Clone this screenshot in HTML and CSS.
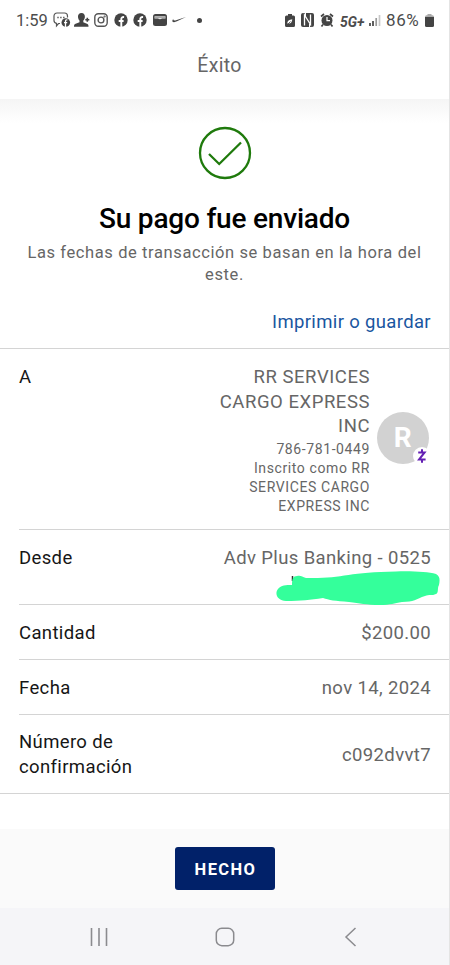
FILE: index.html
```html
<!DOCTYPE html>
<html lang="es">
<head>
  <meta charset="UTF-8">
  <meta name="viewport" content="width=device-width, initial-scale=1.0">
  <title>Éxito</title>
  <link rel="stylesheet" href="styles.css">
</head>
<body>
  <div class="phone">
    <div class="status-bar">
      <div class="status-left">
        <span class="time">1:59</span>
        <svg class="icon-chat" width="18" height="16" viewBox="0 0 18 16">
          <path d="M7 11.5H5.5L3.5 13.8V11.4C1.8 11 1 10 1 8.500V4C1 2.200 2.200 1 4 1h7.500c1.800 0 3 1.200 3 3v1.500" fill="none" stroke="#555" stroke-width="1.200"/>
          <path d="M4.300 5.500h1.400M7.200 5.500h1.400M10.100 5.500h1.400" stroke="#555" stroke-width="1.500"/>
          <circle cx="12.800" cy="10.500" r="4.300" fill="#444"/>
          <path d="M12.500 15v-6q0-1.400 1.900-1.200M11 10.700h3.200" fill="none" stroke="#fff" stroke-width="1.300"/>
        </svg>
        <svg class="icon-person" width="16" height="14" viewBox="0 0 16 14">
          <path d="M7.500 0C5 0 3.800 1.700 4 4c.1 1.600.7 2.800 1.500 3.500v1.700L1 11c-.8.500-1 1.200-1 2.700h14.500c0-1.500-.2-2.200-1-2.700L9.300 9.200V7.500c.8-.7 1.500-1.900 1.600-3.500C11 1.700 10 0 7.500 0z" fill="#444"/>
          <path d="M13.300 4.700v4M11.300 6.700h4" stroke="#444" stroke-width="1.600"/>
        </svg>
        <svg class="icon-insta" width="14" height="14" viewBox="0 0 14 14" fill="none" stroke="#555" stroke-width="1.400">
          <rect x=".8" y=".8" width="12.400" height="12.400" rx="3.500"/>
          <circle cx="7" cy="7" r="2.900"/>
          <circle cx="10.600" cy="3.500" r=".4"/>
        </svg>
        <svg class="icon-fb" width="14" height="14" viewBox="0 0 14 14">
          <circle cx="7" cy="7" r="6.700" fill="#444"/>
          <path d="M7.300 14V6q0-2.200 2.800-1.900M4.700 8h4.900" fill="none" stroke="#fff" stroke-width="1.900"/>
        </svg>
        <svg class="icon-fb" width="14" height="14" viewBox="0 0 14 14">
          <circle cx="7" cy="7" r="6.700" fill="#444"/>
          <path d="M7.300 14V6q0-2.200 2.800-1.900M4.700 8h4.900" fill="none" stroke="#fff" stroke-width="1.900"/>
        </svg>
        <svg class="icon-card" width="14" height="12" viewBox="0 0 14 12">
          <rect width="14" height="12" rx="2.500" fill="#444"/>
          <path d="M1.500 2.300h11v2.200H9q-2 1.600-4 0H1.500z" fill="#e4e4e4"/>
          <path d="M1.500 3.300h11" stroke="#777" stroke-width=".7"/>
        </svg>
        <svg class="icon-swoosh" width="14" height="6" viewBox="0 0 14 6">
          <path d="M1.300 1.800C0 3.500-.2 5.300 2 5.200c1 0 2-.5 3-.9L14 0 4 3.200C2.300 3.700 1 3.400 1.300 1.800z" fill="#444"/>
        </svg>
        <span class="dot"></span>
      </div>
      <div class="status-right">
        <svg width="10" height="13" viewBox="0 0 10 13">
          <path d="M3 0h4v1.500h1.500q1.500 0 1.500 1.500v8.500q0 1.500-1.500 1.500h-7Q0 13 0 11.500V3q0-1.500 1.500-1.500H3z" fill="#444"/>
          <path d="M2.300 9.500c0-3 2-3.800 5-4.300-.2 2.800-1.500 4.300-3.300 4.300z" fill="#fff"/>
          <path d="M2 11l3.500-3.500" stroke="#444" stroke-width=".8"/>
        </svg>
        <svg class="icon-nfc" width="13" height="14" viewBox="0 0 13 14">
          <rect width="13" height="14" rx="2" fill="#444"/>
          <path d="M3.500 12.500V2l6 9.500V1.500" fill="none" stroke="#fff" stroke-width="1.300"/>
          <path d="M4.500 0v3M8.500 14v-3" stroke="#fff"/>
        </svg>
        <svg class="icon-alarm" width="14" height="14" viewBox="0 0 14 14">
          <circle cx="7" cy="7.500" r="5.500" fill="#444"/>
          <path d="M1 3.500L4 1M13 3.500L10 1M3 11.500l-1.500 2M11 11.500l1.500 2" stroke="#444" stroke-width="1.700"/>
          <path d="M7 4v3.700h3" fill="none" stroke="#fff" stroke-width="1.200"/>
        </svg>
        <span class="network">5G+</span>
        <svg class="icon-signal" width="12" height="12" viewBox="0 0 12 12">
          <path d="M1 9v3M4 7v5" stroke="#444" stroke-width="1.700"/>
          <path d="M7.200 4v8" stroke="#999" stroke-width="1.700"/>
          <path d="M10.500 1v11" stroke="#c8c8c8" stroke-width="1.700"/>
        </svg>
        <span class="battery-text">86%</span>
        <svg class="icon-battery" width="9" height="13" viewBox="0 0 9 13">
          <path d="M2.500 0h4v1.300h1Q9 1.300 9 3H0q0-1.700 1.500-1.700h1z" fill="#aaa"/>
          <path d="M0 3h9v8.500q0 1.500-1.500 1.500h-6Q0 13 0 11.500z" fill="#444"/>
        </svg>
      </div>
    </div>

    <header class="title-bar">Éxito</header>

    <main>
      <section class="success">
        <svg class="check" width="54" height="54" viewBox="0 0 54 54" fill="none" stroke="#1f7a0c" stroke-width="2.300">
          <circle cx="27" cy="27" r="25"/>
          <path d="M11 28l10.200 10L43 16.500"/>
        </svg>
        <h1>Su pago fue enviado</h1>
        <p class="sub">Las fechas de transacción se basan en la hora del este.</p>
        <a class="print">Imprimir o guardar</a>
      </section>

      <section class="details">
        <div class="row recipient">
          <span class="label">A</span>
          <div class="payee">
            <div class="value">RR SERVICES<br>CARGO EXPRESS<br>INC</div>
            <div class="small">786-781-0449<br>Inscrito como RR<br>SERVICES CARGO<br>EXPRESS INC</div>
          </div>
          <div class="avatar">
            <span>R</span>
            <div class="zelle">
              <svg width="10" height="14" viewBox="0 0 10 14" fill="none" stroke="#6420b4" stroke-width="2">
                <path d="M1.200 3.400h6.400L2 10.600h6.600M5 .3v3M5 10.700v3"/>
              </svg>
            </div>
          </div>
        </div>
        <div class="row from">
          <span class="label">Desde</span>
          <span class="value">Adv Plus Banking - 0525</span>
          <svg class="scribble" width="166" height="36" viewBox="0 0 166 36">
            <path d="M16.500 5v5" stroke="#333" stroke-width="1.500"/>
            <path d="M16 14C16 8 17 5 21 5c4-1 5 1 9 2C65 8 72 1 120 .5c18-.5 32 .5 40 2.500 4 2 4 6 3 11-2 3 0 8-3 9-4 2-7 0-11 2-9 3-11 6-23 6-8 1-11 3-22 3-14 0-20-2-31-3-14-1-20-2-26-4-13 2-22 3-37 3C2 30-2 23 2 18c3-4 8-4 14-4z" fill="#34ff9b"/>
          </svg>
        </div>
        <div class="row">
          <span class="label">Cantidad</span>
          <span class="value">$200.00</span>
        </div>
        <div class="row">
          <span class="label">Fecha</span>
          <span class="value">nov 14, 2024</span>
        </div>
        <div class="row confirmation">
          <span class="label">Número de<br>confirmación</span>
          <span class="value">c092dvvt7</span>
        </div>
      </section>
    </main>

    <footer>
      <button class="done">HECHO</button>
    </footer>

    <nav class="nav-bar">
      <svg width="20" height="20" viewBox="0 0 20 20" stroke="#8b8b8f" stroke-width="1.600">
        <path d="M2.500 1v18M10 1v18M17.500 1v18"/>
      </svg>
      <svg width="20" height="20" viewBox="0 0 20 20" fill="none" stroke="#8b8b8f" stroke-width="1.500">
        <rect x="1.300" y="1.300" width="17.400" height="17.400" rx="5.500"/>
      </svg>
      <svg width="20" height="20" viewBox="0 0 20 20" fill="none" stroke="#8b8b8f" stroke-width="1.500">
        <path d="M15.500 1L6 10l9.500 9"/>
      </svg>
    </nav>
  </div>
</body>
</html>
```
FILE: styles.css
```css
* {
  box-sizing: border-box;
}

body {
  margin: 0;
  font-family: Roboto, sans-serif;
  background: #fff;
  color: #161616;
}

svg {
  display: block;
  flex-shrink: 0;
}

.phone {
  width: 450px;
  height: 965px;
  display: flex;
  flex-direction: column;
  border-right: 1px solid #e4e4e4;
  overflow: hidden;
}

/* status bar */
.status-bar {
  height: 40px;
  padding: 0 15px 0 16px;
  display: flex;
  justify-content: space-between;
  color: #4c4c4c;
}

.status-left,
.status-right {
  display: flex;
  align-items: center;
}

.time {
  width: 37px;
  font-size: 16.5px;
}

.icon-person {
  margin-left: 3px;
}

.icon-insta {
  margin-left: 4px;
}

.icon-fb {
  margin-left: 6px;
}

.icon-fb + .icon-fb {
  margin-left: 5px;
}

.icon-card {
  margin-left: 6px;
}

.icon-swoosh {
  margin-left: 5px;
}

.dot {
  width: 5px;
  height: 5px;
  margin-left: 11px;
  border-radius: 50%;
  background: #444;
}

.icon-nfc {
  margin-left: 6px;
}

.icon-alarm {
  margin-left: 6px;
}

.network {
  width: 30px;
  margin-left: 6px;
  padding-top: 3px;
  font-size: 14px;
  font-weight: 700;
  font-style: italic;
}

.icon-signal {
  margin-left: -1px;
}

.battery-text {
  width: 38px;
  margin-left: 5px;
  font-size: 17px;
  letter-spacing: 0.6px;
}

.icon-battery {
  margin-left: 1px;
}

.title-bar {
  height: 59px;
  line-height: 52px;
  text-align: center;
  font-size: 19.5px;
  letter-spacing: 0.3px;
  text-indent: -10px;
  color: #666;
}

/* success message */
.success {
  height: 249px;
  padding-top: 27px;
  display: flex;
  flex-direction: column;
  align-items: center;
  background: linear-gradient(#f5f5f5, #fff 24px);
}

h1 {
  margin: 21px 0 0;
  font-size: 28px;
  line-height: 36px;
  font-weight: 500;
  letter-spacing: -0.2px;
  color: #000;
}

.sub {
  margin: 5px 0 0;
  width: 410px;
  text-align: center;
  font-size: 16.5px;
  line-height: 22px;
  letter-spacing: 0.6px;
  color: #666;
}

.print {
  align-self: flex-end;
  margin: 24px 18px 0 0;
  font-size: 18.5px;
  line-height: 24px;
  letter-spacing: 0.35px;
  color: #1a56a0;
}

/* payment details */
.details {
  border-top: 1px solid #d4d4d4;
  border-bottom: 1px solid #d4d4d4;
}

.row {
  position: relative;
  height: 55px;
  margin-left: 19px;
  padding: 2px 18px 0 0;
  display: flex;
  justify-content: space-between;
  align-items: center;
  border-bottom: 1px solid #d4d4d4;
  font-size: 18.5px;
  line-height: 24.700px;
  letter-spacing: 0.37px;
}

.value {
  color: #666;
  text-align: right;
}

.recipient {
  height: 181px;
  align-items: flex-start;
  padding-top: 16px;
}

.recipient .value {
  letter-spacing: 0.55px;
}

.payee {
  margin-left: auto;
  text-align: right;
}

.small {
  margin-top: 1px;
  font-size: 14px;
  line-height: 18.800px;
  letter-spacing: 0.6px;
  color: #666;
}

.avatar {
  position: relative;
  width: 52px;
  height: 52px;
  margin: 47px 2px 0 7px;
  border-radius: 50%;
  background: #d2d2d2;
  color: #fff;
  font-size: 28px;
  font-weight: 700;
  line-height: 52px;
  text-align: center;
}

.zelle {
  position: absolute;
  right: -2px;
  bottom: -1px;
  width: 18px;
  height: 18px;
  display: flex;
  align-items: center;
  justify-content: center;
  border-radius: 50%;
  background: #fff;
}

.from {
  height: 75px;
  align-items: flex-start;
  padding-top: 16px;
}

/* marker stroke hiding the balance */
.scribble {
  position: absolute;
  right: 7px;
  top: 41px;
}

.confirmation {
  height: 78px;
  border-bottom: none;
}

footer {
  height: 79px;
  margin-top: auto;
  padding-top: 18px;
  text-align: center;
  background: #fafafa;
}

.done {
  width: 100px;
  height: 43px;
  padding: 2px 0 0 2px;
  border: none;
  border-radius: 3px;
  background: #012169;
  color: #fff;
  font-family: inherit;
  font-size: 16.500px;
  font-weight: 700;
  letter-spacing: 1.400px;
}

.nav-bar {
  height: 57px;
  padding: 0 89px;
  display: flex;
  justify-content: space-between;
  align-items: center;
  background: #f5f5f8;
}
```
